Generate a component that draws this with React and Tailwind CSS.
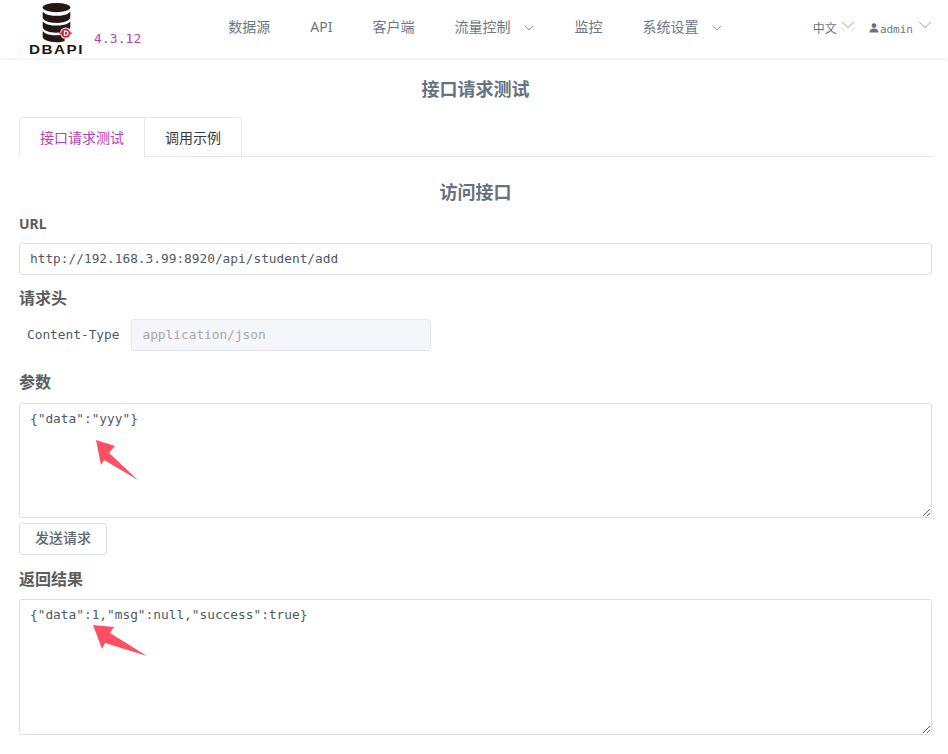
import React from "react";
import { ChevronDown } from "lucide-react";

const cjk = '"Noto Sans","Noto Sans CJK SC",sans-serif';
const mono = '"DejaVu Sans Mono","Noto Sans CJK SC",monospace';

function Logo() {
  return (
    <div className="w-[56px] h-[55px] flex flex-col items-center">
      <svg width="31" height="43" viewBox="0 0 30 42" className="mt-[3px] shrink-0">
        <ellipse cx="15" cy="4.5" rx="13.5" ry="4.5" fill="#231815" />
        <path d="M1.5 8.5c3 3 8 4 13.5 4s10.500-1 13.500-4v5.500c0 3-6 5.500-13.500 5.500S1.500 17 1.500 14z" fill="#231815" />
        <path d="M1.500 18c3 3 8 4 13.500 4s10.500-1 13.500-4v5.500c0 3-6 5.500-13.500 5.500s-13.500-2.500-13.500-5.500z" fill="#231815" />
        <path d="M1.500 27.500c3 3 8 4 13.500 4 3 0 6-.3 8-1v6.500c-2 .8-5 1.300-8 1.300-7.500 0-13.500-2.300-13.500-5.300z" fill="#231815" />
        <circle cx="24" cy="29.500" r="5.500" fill="#fff" />
        <circle cx="24" cy="29.500" r="4.500" fill="#d9212c" />
        <path d="M22.200 26.800h1.800a2.700 2.700 0 0 1 0 5.400h-1.800z" fill="#fff" />
        <path d="M23.300 28h.7a1.500 1.500 0 0 1 0 3h-.7z" fill="#d9212c" />
        <path d="M17.500 29.500h2.500M28 29.500h2" stroke="#d9212c" strokeWidth="1.300" />
      </svg>
      <span className="text-[12.500px] leading-[11px] -mt-[1px] font-bold text-[#231815] tracking-[1.2px] scale-x-[1.22] whitespace-nowrap" style={{ fontFamily: '"Liberation Sans",sans-serif' }}>DBAPI</span>
    </div>
  );
}

function NavItem({ label, chevron, className = "" }) {
  return (
    <span className={`flex items-center gap-[11px] text-[14px] text-[#6b7785] ${className}`}>
      {label}
      {chevron && <ChevronDown size={16} strokeWidth={1.200} className="text-[#76808c] mt-[4px]" />}
    </span>
  );
}

function Arrow({ className, points }) {
  return (
    <svg className={`absolute pointer-events-none ${className}`} width="60" height="60" viewBox="0 0 60 60">
      <polygon points={points} fill="#fd5064" />
    </svg>
  );
}

function Heading({ children, className = "" }) {
  return <div className={`font-bold leading-[20px] text-[#5c5c5c] ${className}`}>{children}</div>;
}

export default function App() {
  return (
    <div className="relative w-[948px] h-[754px] overflow-hidden bg-white" style={{ fontFamily: cjk }}>
      <header className="h-[58px] flex items-start bg-white shadow-[0_1px_4px_rgba(0,0,0,0.08)] pl-[28px] pr-[12px]">
        <Logo />
        <span className="ml-[10px] mt-[30px] text-[13px] leading-[18px] text-[#b840b8] tracking-[0.05px]" style={{ fontFamily: mono }}>4.3.12</span>
        <nav className="ml-[87px] mt-[15px] flex items-center h-[22px]">
          <NavItem label="数据源" />
          <NavItem label="API" className="ml-[40px]" />
          <NavItem label="客户端" className="ml-[40px]" />
          <NavItem label="流量控制" chevron className="ml-[40px]" />
          <NavItem label="监控" className="ml-[37px]" />
          <NavItem label="系统设置" chevron className="ml-[40px]" />
        </nav>
        <div className="ml-auto mt-[14px] flex items-center text-[#6b7785]">
          <span className="text-[12px] leading-[22px]">中文</span>
          <ChevronDown size={22} strokeWidth={0.900} className="ml-[0px] mb-[8px] text-[#85909a]" />
          <svg width="10" height="10" viewBox="0 0 10 10" className="ml-[10px] mb-[3px]" fill="#66727f">
            <circle cx="5" cy="2.600" r="2.400" />
            <path d="M.500 9.500c0-3 2-4 4.500-4s4.500 1 4.500 4z" />
          </svg>
          <span className="text-[11px] leading-[22px] ml-[1px] mt-[1px]" style={{ fontFamily: mono }}>admin</span>
          <ChevronDown size={22} strokeWidth={0.900} className="ml-[1px] mb-[8px] text-[#85909a]" />
        </div>
      </header>

      <main className="px-[19px] pr-[16px]">
        <h2 className="mt-[19px] text-center text-[18px] leading-[24px] font-bold text-[#66727f]">接口请求测试</h2>

        <div className="mt-[16px] flex h-[40px] border-b border-[#e6e7ee]">
          <div className="w-[126px] h-[40px] flex items-center justify-center text-[14px] text-[#b840b8] bg-white border border-b-0 border-[#e6e7ee] rounded-tl-[4px]">接口请求测试</div>
          <div className="w-[97px] h-[39px] flex items-center justify-center text-[14px] text-[#333a42] border border-l-0 border-[#e6e7ee] border-b-0 rounded-tr-[4px]">调用示例</div>
        </div>

        <h3 className="mt-[22px] text-center text-[18px] leading-[26px] font-bold text-[#66727f]">访问接口</h3>

        <Heading className="mt-[9px] text-[14px]">URL</Heading>
        <input
          readOnly
          value="http://192.168.3.99:8920/api/student/add"
          className="mt-[9px] block w-full h-[32px] px-[10px] pb-[1px] border border-[#dcdfe6] rounded-[3px] text-[12.800px] text-[#4e5a66] outline-none"
          style={{ fontFamily: mono }}
        />

        <Heading className="mt-[13px] text-[16px]">请求头</Heading>
        <div className="mt-[11px] flex items-center pl-[8px]">
          <span className="text-[12.800px] text-[#4e5a66]" style={{ fontFamily: mono }}>Content-Type</span>
          <input
            readOnly
            value="application/json"
            className="ml-[12px] w-[300px] h-[32px] px-[10px] pb-[1px] bg-[#f5f6f9] border border-[#e4e7ed] rounded-[3px] text-[12.800px] text-[#a5a8ae] outline-none"
            style={{ fontFamily: mono }}
          />
        </div>

        <Heading className="mt-[21px] text-[16px]">参数</Heading>
        <textarea
          readOnly
          defaultValue={'{"data":"yyy"}'}
          className="mt-[11px] block w-full h-[115px] px-[10px] py-[5px] border border-[#dcdfe6] rounded-[3px] text-[12.800px] leading-[20px] text-[#4e5a66] outline-none resize-y"
          style={{ fontFamily: mono }}
        />
        <button className="mt-[5px] block w-[88px] h-[32px] pb-[3px] border border-[#dcdfe6] rounded-[3px] text-[14px] text-[#5c6670] bg-white font-medium">发送请求</button>

        <Heading className="mt-[14px] text-[16px]">返回结果</Heading>
        <textarea
          readOnly
          defaultValue={'{"data":1,"msg":null,"success":true}'}
          className="mt-[10px] block w-full h-[136px] px-[10px] py-[5px] border border-[#dcdfe6] rounded-[3px] text-[12.800px] leading-[20px] text-[#4e5a66] outline-none resize-y"
          style={{ fontFamily: mono }}
        />
      </main>

      <Arrow className="left-[90px] top-[435px]" points="6,5 25,11 19,18 48,45 14,25 11,30" />
      <Arrow className="left-[90px] top-[620px]" points="3,5 24,7 20,13 57,36 15,23 12,29" />
    </div>
  );
}
